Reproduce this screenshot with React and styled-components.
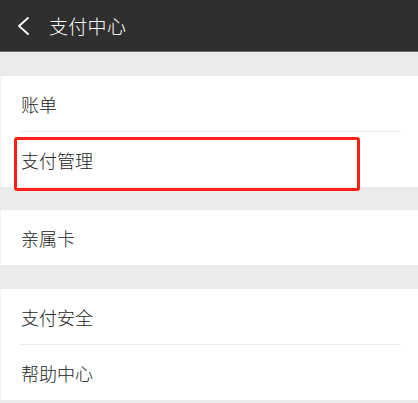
import React from "react";
import styled, { createGlobalStyle } from "styled-components";

const Global = createGlobalStyle`
  html, body { margin: 0; padding: 0; background: #ffffff; }
  body { font-family: "Noto Sans CJK SC", "Noto Sans", sans-serif; }
  * { box-sizing: border-box; }
`;

const Page = styled.div`
  width: 418px;
  height: 403px;
  overflow: hidden;
  background: #ebebeb;
  display: flex;
  flex-direction: column;
`;

const NavBar = styled.header`
  height: 52px;
  flex: none;
  background: #2f2f2f;
  border-bottom: 1px solid #6e6e6e;
  display: flex;
  align-items: center;
  padding-left: 17px;
  gap: 19px;
  color: #ffffff;
`;

const BackIcon = styled.svg`
  width: 13px;
  height: 18px;
  flex: none;
  margin-top: 1px;
`;

const Title = styled.h1`
  margin: 0;
  font-size: 19px;
  font-weight: 300;
  line-height: 1;
  letter-spacing: 0.3px;
`;

const Gap = styled.div`
  height: ${(p) => p.$h}px;
  flex: none;
  background: #ebebeb;
`;

const Group = styled.section`
  background: #ffffff;
  flex: none;
  display: flex;
  flex-direction: column;
  border-left: 1px solid #f2f2f2;
`;

const Row = styled.div`
  position: relative;
  height: ${(p) => p.$h || 55}px;
  display: flex;
  align-items: center;
  padding-left: 20px;
  font-size: 18px;
  font-weight: 300;
  color: #222222;
  line-height: 1;
`;

const Divider = styled.div`
  height: 1px;
  margin: 0 17px 0 19px;
  background: #ebebeb;
`;

const Highlight = styled.div`
  position: absolute;
  left: 13px;
  top: 5px;
  width: 346px;
  height: 54px;
  border: 3px solid #ff2118;
  border-radius: 3px;
  pointer-events: none;
  z-index: 2;
`;

export default function App() {
  return (
    <>
      <Global />
      <Page>
        <NavBar>
          <BackIcon viewBox="0 0 13 18">
            <polyline
              points="11,1 2,9 11,17"
              fill="none"
              stroke="#ffffff"
              strokeWidth="1.8"
              strokeLinecap="round"
              strokeLinejoin="round"
            />
          </BackIcon>
          <Title>支付中心</Title>
        </NavBar>
        <Gap $h={24} />
        <Group>
          <Row $h={55}>账单</Row>
          <Divider />
          <Row $h={55}>
            支付管理
            <Highlight />
          </Row>
        </Group>
        <Gap $h={23} />
        <Group>
          <Row $h={55}>亲属卡</Row>
        </Group>
        <Gap $h={24} />
        <Group>
          <Row $h={55}>支付安全</Row>
          <Divider />
          <Row $h={55}>帮助中心</Row>
        </Group>
      </Page>
    </>
  );
}
